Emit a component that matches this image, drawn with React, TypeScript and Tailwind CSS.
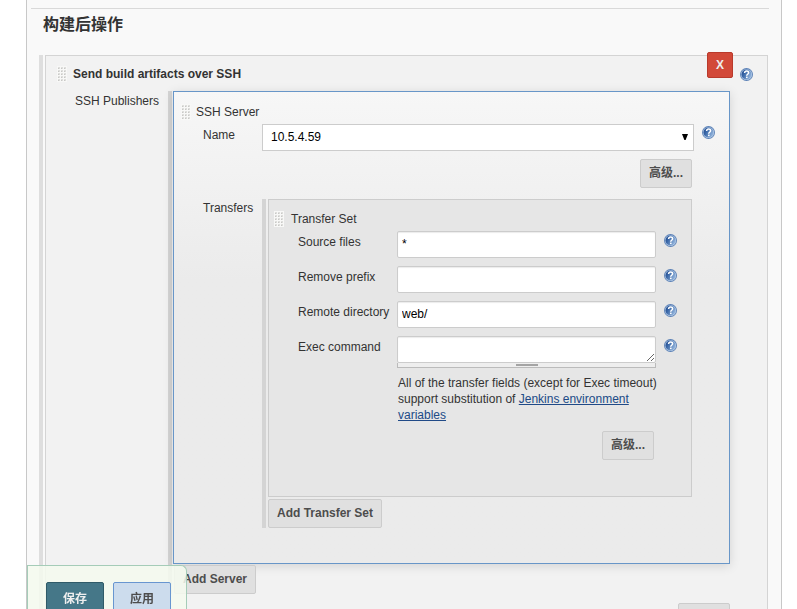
import { useId, type ReactNode } from "react";

function HelpIcon({ className = "" }: { className?: string }) {
  return (
    <button type="button" aria-label="Help" className={`block size-[13px] shrink-0 ${className}`}>
      <svg viewBox="0 0 13 13" className="block size-[13px]" aria-hidden="true">
        <defs>
          <linearGradient id="helpFill" x1="0" y1="0" x2="1" y2="0.5">
            <stop offset="0" stopColor="#1d4587" />
            <stop offset="0.4" stopColor="#3b68a8" />
            <stop offset="1" stopColor="#8fb1da" />
          </linearGradient>
        </defs>
        <circle cx="6.5" cy="6.5" r="6.5" fill="#5a80b6" />
        <circle cx="6.5" cy="6.5" r="5.6" fill="#b4cae6" />
        <circle cx="6.5" cy="6.5" r="5" fill="url(#helpFill)" />
        <path d="M4.6 5C4.7 3.8 5.5 3.1 6.6 3.1c1.2 0 2 .7 2 1.7 0 1.4-1.9 1.5-1.9 2.9" fill="none" stroke="#fff" strokeWidth="1.5" />
        <rect x="6" y="8.6" width="1.6" height="1.5" fill="#fff" />
      </svg>
    </button>
  );
}

const dots = [0, 1, 2, 3, 4];
const columns = [0, 1, 2];

function Grip() {
  return (
    <svg width="10" height="16" className="block shrink-0 cursor-move" shapeRendering="crispEdges" aria-hidden="true">
      <rect width="10" height="16" fill="#f8f8f7" />
      {dots.map((row) =>
        columns.map((col) => (
          <g key={`${row}-${col}`}>
            <rect x={1 + col * 3} y={1 + row * 3} width="2" height="2" fill="#dededc" />
            <rect x={1 + col * 3} y={2 + row * 3} width="1" height="1" fill="#c8c8c6" />
          </g>
        )),
      )}
    </svg>
  );
}

function GrayButton({ children, className = "" }: { children: ReactNode; className?: string }) {
  return (
    <button
      type="button"
      className={`h-[29px] shrink-0 rounded-[2px] border border-[#ccc] bg-[#e0e0e0] px-2 pb-[2px] font-bold whitespace-nowrap text-[#4d4d4d] ${className}`}
    >
      {children}
    </button>
  );
}

function Field({ label, value }: { label: string; value: string }) {
  const id = useId();
  return (
    <div className="flex h-[35px] items-start">
      <label htmlFor={id} className="w-[99px] shrink-0 pt-[3px] whitespace-nowrap">
        {label}
      </label>
      <input
        id={id}
        type="text"
        defaultValue={value}
        className="h-[27px] min-w-0 flex-1 rounded-[2px] border border-[#ccc] bg-white px-1 pb-[2px] text-black shadow-[inset_0_1px_1px_rgba(0,0,0,0.08)]"
      />
      <HelpIcon className="mt-[3px] ml-2" />
    </div>
  );
}

function TransferSet() {
  return (
    <section className="h-[298px] border border-[#ccc] bg-[#e6e6e6]">
      <div className="flex items-start pt-[11px] pl-[5px]">
        <Grip />
        <h4 className="ml-[7px] h-5">Transfer Set</h4>
      </div>
      <div className="pr-[14px] pl-[29px]">
        <Field label="Source files" value="*" />
        <Field label="Remove prefix" value="" />
        <Field label="Remote directory" value="web/" />
        <div className="flex items-start">
          <label htmlFor="exec" className="w-[99px] shrink-0 pt-[3px] whitespace-nowrap">
            Exec command
          </label>
          <div className="min-w-0 flex-1">
            <textarea
              id="exec"
              className="block h-[27px] w-full resize overflow-hidden rounded-[2px] border border-[#ccc] bg-white px-1 py-1 text-black shadow-[inset_0_1px_1px_rgba(0,0,0,0.08)]"
            />
            <div className="flex h-[5px] cursor-row-resize justify-center border-x border-b border-[#bbb] bg-[#eee] pt-px">
              <div className="h-[2px] w-[22px] bg-[#a4a4a4]" />
            </div>
          </div>
          <HelpIcon className="mt-[3px] ml-2" />
        </div>
        <p className="mt-[7px] mr-[13px] ml-[99px] pl-px">
          All of the transfer fields (except for Exec timeout) support substitution of{" "}
          <a href="#environment" className="text-[#204a87] underline">
            Jenkins environment variables
          </a>
        </p>
        <div className="mt-2 mr-[23px] flex justify-end">
          <GrayButton>高级...</GrayButton>
        </div>
      </div>
    </section>
  );
}

function SshServer() {
  return (
    <section className="h-[473px] border border-[#6896c8] bg-linear-to-b from-[#f7f7f7] via-[#ebebeb] via-40% to-[#ebebeb] pr-[14px] shadow-[0_2px_10px_rgba(0,0,0,0.13)]">
      <div className="flex items-start pt-3 pl-[7px]">
        <Grip />
        <h3 className="ml-[5px] h-5">SSH Server</h3>
      </div>
      <div className="flex items-start pl-[29px]">
        <label htmlFor="server" className="w-[59px] shrink-0 pt-[3px]">
          Name
        </label>
        <div className="relative min-w-0 flex-1">
          <select
            id="server"
            className="block h-[27px] w-full appearance-none border border-[#ccc] bg-white px-2 pb-[2px] text-black"
          >
            <option>10.5.4.59</option>
          </select>
          <svg width="6" height="6" viewBox="0 0 6 6" className="pointer-events-none absolute top-[10px] right-[6px]" aria-hidden="true">
            <path d="M0 0h6L3.6 6H2.4Z" fill="#000" />
          </svg>
        </div>
        <HelpIcon className="mt-[2px] ml-2" />
      </div>
      <div className="mt-2 mr-[23px] flex justify-end">
        <GrayButton>高级...</GrayButton>
      </div>
      <div className="mt-[11px] mr-[23px] flex items-start pl-[29px]">
        <h4 className="w-[59px] shrink-0 pt-px">Transfers</h4>
        <div className="h-[329px] min-w-0 flex-1 border-l-4 border-[#d4d4d4] pl-[2px]">
          <TransferSet />
          <GrayButton className="mt-[2px] block">Add Transfer Set</GrayButton>
        </div>
      </div>
    </section>
  );
}

export default function App() {
  return (
    <div className="h-screen overflow-hidden bg-white font-['Liberation_Sans','Noto_Sans_CJK_SC',sans-serif] text-[12px] leading-4 text-[#333]">
      <main className="mr-[15px] ml-[26px] min-h-screen border-x border-[#c8c8c8] bg-[#f9f9f9] pt-2">
        <hr className="mr-3 ml-1 border-[#d9d9d9]" />
        <h1 className="mt-1 ml-4 text-[16px] leading-6 font-bold">构建后操作</h1>
        <div className="mt-[18px] mr-[13px] ml-3 border-l-4 border-[#dedede] pl-[2px]">
          <section className="relative border border-[#d4d4d4] bg-[#f2f2f2] pb-10">
            <div className="flex h-[35px] items-start pt-[10px] pl-[11px]">
              <Grip />
              <h2 className="ml-[6px] font-bold">Send build artifacts over SSH</h2>
              <HelpIcon className="mt-[2px] mr-[14px] ml-auto" />
            </div>
            <button
              type="button"
              aria-label="Delete"
              className="absolute -top-1 right-[34px] size-[26px] rounded-[2px] border border-[#b93a2c] bg-[#d24939] font-bold text-[#eee]"
            >
              X
            </button>
            <div className="mr-[37px] flex items-start pl-[29px]">
              <h3 className="w-[93px] shrink-0 pt-[2px] whitespace-nowrap">SSH Publishers</h3>
              <div className="min-w-0 flex-1 border-l-4 border-[#d4d4d4] pl-px">
                <SshServer />
                <GrayButton className="mt-px ml-px block">Add Server</GrayButton>
              </div>
            </div>
            <div className="mt-[9px] mr-[37px] flex justify-end">
              <GrayButton>高级...</GrayButton>
            </div>
          </section>
        </div>
      </main>
      <footer className="fixed bottom-0 left-[27px] flex h-11 gap-[9px] overflow-hidden rounded-tr-[6px] border-x border-t border-[#a5ccb8] bg-[#f5faef]/85 pt-4 pr-[15px] pl-[18px]">
        <button type="submit" className="h-8 w-[58px] shrink-0 rounded-[2px] border border-[#2f5a68] bg-[#457788] pt-[2px] font-bold text-[#eee]">
          保存
        </button>
        <button type="button" className="h-8 w-[58px] shrink-0 rounded-[2px] border border-[#6896d0] bg-[#ccdced] pt-[2px] font-bold text-[#4d4d4d]">
          应用
        </button>
      </footer>
    </div>
  );
}
